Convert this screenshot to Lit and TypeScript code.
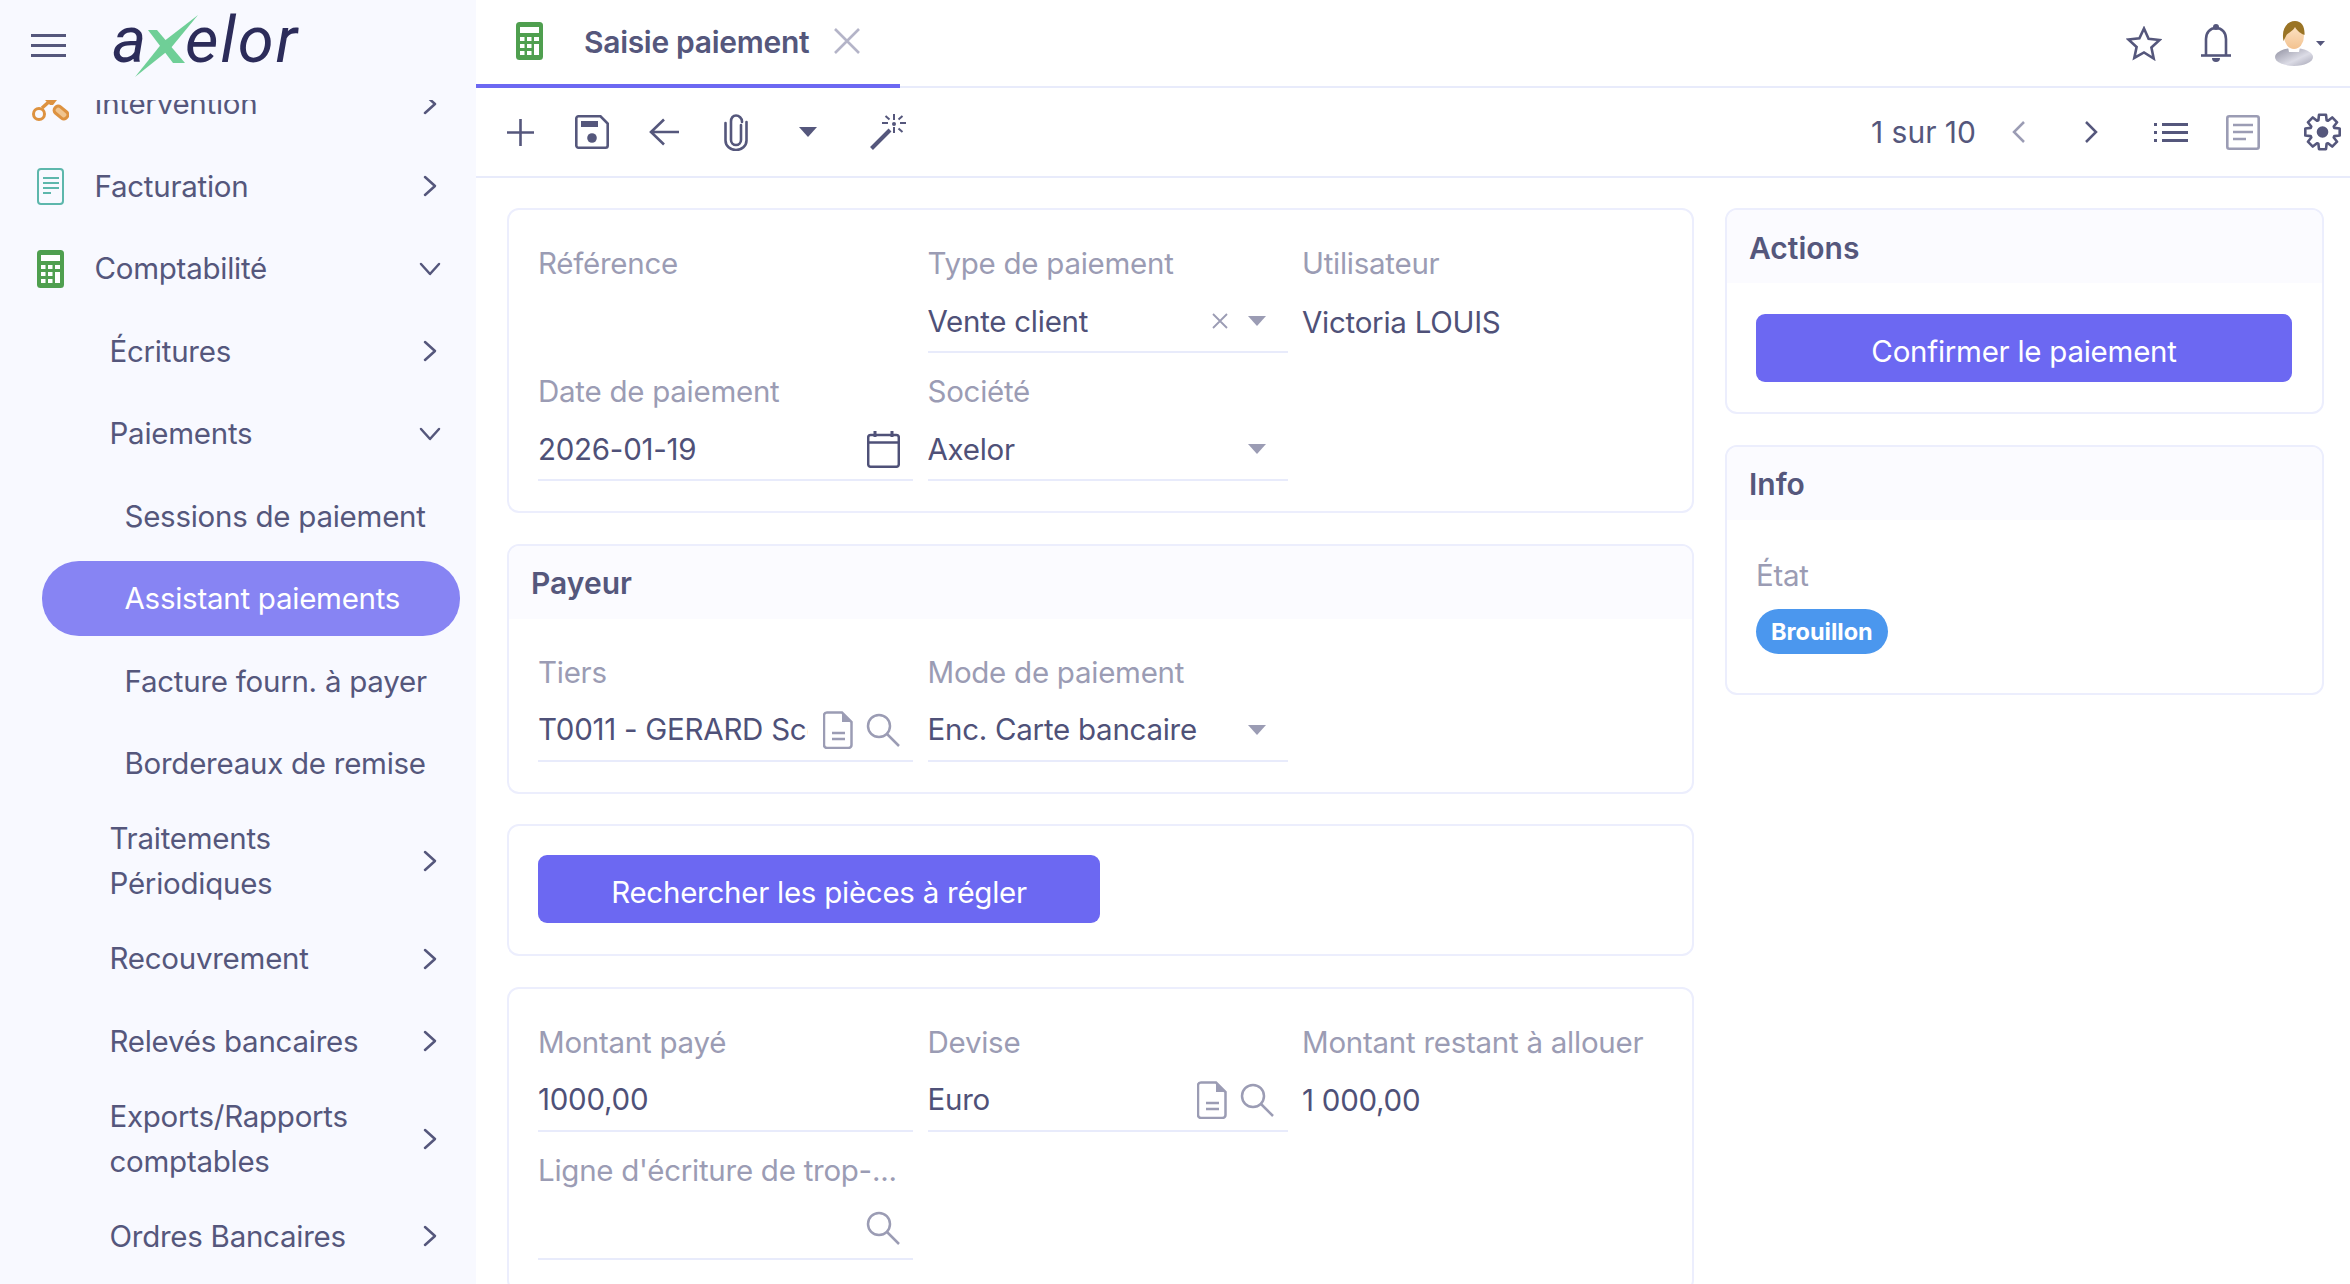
import {LitElement, html, css} from 'lit';
import {customElement} from 'lit/decorators.js';

type NavRow = {
    label: string;
    level: 0 | 1 | 2;
    icon?: 'moto' | 'doc' | 'calc';
    arrow?: 'right' | 'down';
    active?: boolean;
};

const NAV: NavRow[] = [
    {label: 'Intervention', level: 0, icon: 'moto', arrow: 'right'},
    {label: 'Facturation', level: 0, icon: 'doc', arrow: 'right'},
    {label: 'Comptabilité', level: 0, icon: 'calc', arrow: 'down'},
    {label: 'Écritures', level: 1, arrow: 'right'},
    {label: 'Paiements', level: 1, arrow: 'down'},
    {label: 'Sessions de paiement', level: 2},
    {label: 'Assistant paiements', level: 2, active: true},
    {label: 'Facture fourn. à payer', level: 2},
    {label: 'Bordereaux de remise', level: 2},
    {label: 'Traitements Périodiques', level: 1, arrow: 'right'},
    {label: 'Recouvrement', level: 1, arrow: 'right'},
    {label: 'Relevés bancaires', level: 1, arrow: 'right'},
    {label: 'Exports/Rapports comptables', level: 1, arrow: 'right'},
    {label: 'Ordres Bancaires', level: 1, arrow: 'right'},
];

// 27x38 calculator used in the menu and on the tab
const calcIcon = html`<svg width="27" height="38" viewBox="0 0 27 38">
    <rect width="27" height="38" rx="3.5" fill="#4f9f4f" />
    <rect x="4" y="5" width="19" height="6" fill="#fff" />
    <path
        fill="#fff"
        d="M4 15h4.5v4H4zM11 15h4.5v4H11zM18 15h5v4h-5zM4 22h4.5v4H4zM11 22h4.5v4H11zM18 22h5v11h-5zM4 29h4.5v4H4zM11 29h4.5v4H11z"
    />
</svg>`;

const docIcon = html`<svg width="27" height="37" viewBox="0 0 27 37">
    <rect x="1" y="1" width="25" height="35" rx="3" fill="none" stroke="#5db7ac" stroke-width="2" />
    <path d="M6 10h16M6 15h16M6 20h16M6 25h8" stroke="#5db7ac" stroke-width="2" />
</svg>`;

const motoIcon = html`<svg class="moto" width="38" height="36" viewBox="0 0 38 36">
    <circle cx="8" cy="28" r="5.5" fill="none" stroke="#dd9240" stroke-width="3" />
    <path d="M11 22 20 14" stroke="#dd9240" stroke-width="3.5" />
    <path d="M14 14h12l-4 5h-3z" fill="#dd9240" />
    <rect x="22.5" y="22.5" width="15" height="8" rx="3.500" transform="rotate(40 30 26.500)" fill="#f0c48e" stroke="#dd9240" stroke-width="3" />
</svg>`;

const chevRight = html`<svg class="chev" width="14" height="22" viewBox="0 0 14 22">
    <path d="M2 2l10 9-10 9" fill="none" stroke="currentColor" stroke-width="2.5" stroke-linecap="round" stroke-linejoin="round" />
</svg>`;

const chevLeft = html`<svg width="14" height="24" viewBox="0 0 14 24">
    <path d="M12 2 2 12l10 10" fill="none" stroke="currentColor" stroke-width="2.5" />
</svg>`;

const chevRightNav = html`<svg width="14" height="24" viewBox="0 0 14 24">
    <path d="M2 2l10 10L2 22" fill="none" stroke="currentColor" stroke-width="2.5" />
</svg>`;

const chevDown = html`<svg class="chev" width="22" height="14" viewBox="0 0 22 14">
    <path d="M2 2l9 10 9-10" fill="none" stroke="currentColor" stroke-width="2.5" stroke-linecap="round" stroke-linejoin="round" />
</svg>`;

const caret = html`<svg class="caret" width="18" height="10" viewBox="0 0 18 10"><path d="M0 0h18L9 10z" fill="currentColor" /></svg>`;

const searchIcon = html`<svg class="muted" width="34" height="34" viewBox="0 0 34 34">
    <circle cx="13" cy="13" r="11" fill="none" stroke="currentColor" stroke-width="2.5" />
    <path d="M21 21l12 12" stroke="currentColor" stroke-width="2.5" />
</svg>`;

const fileIcon = html`<svg class="muted" width="30" height="38" viewBox="0 0 30 38">
    <path d="M4 1.5h15l9.5 9.5v23a3 3 0 0 1-3 3H4a3 3 0 0 1-3-3v-30a3 3 0 0 1 3-2.5z" fill="none" stroke="currentColor" stroke-width="2.5" />
    <path d="M19 1.5v9.5h9.5z" fill="currentColor" />
    <path d="M9 22h13M9 28h13" stroke="currentColor" stroke-width="2.5" />
</svg>`;

const calendarIcon = html`<svg width="33" height="37" viewBox="0 0 33 37">
    <rect x="1.2" y="4" width="30.6" height="31.8" rx="2.5" fill="none" stroke="currentColor" stroke-width="2.5" />
    <path d="M1 11.5h31" stroke="currentColor" stroke-width="2.5" />
    <path d="M8 0v6M25 0v6" stroke="currentColor" stroke-width="3" />
</svg>`;

const crossIcon = html`<svg class="muted" width="16" height="16" viewBox="0 0 16 16">
    <path d="M1 1l14 14M15 1 1 15" stroke="currentColor" stroke-width="1.8" />
</svg>`;

// gear outline built from 8 teeth
function gearPath() {
    const cx = 18.5;
    const cy = 19;
    const pts: string[] = [];
    for (let i = 0; i < 8; i++) {
        const a = (i * Math.PI) / 4 - Math.PI / 2;
        const p = (r: number, d: number) =>
            `${(cx + r * Math.cos(a + d)).toFixed(1)} ${(cy + r * Math.sin(a + d)).toFixed(1)}`;
        pts.push(p(12.5, -0.33), p(17.5, -0.2), p(17.5, 0.2), p(12.5, 0.33));
    }
    return 'M' + pts.join('L') + 'Z';
}

const gearIcon = html`<svg width="37" height="38" viewBox="0 0 37 38">
    <path d=${gearPath()} fill="none" stroke="currentColor" stroke-width="2.6" stroke-linejoin="round" />
    <circle cx="18.5" cy="19" r="5.8" fill="currentColor" />
</svg>`;

const avatar = html`<svg width="38" height="45" viewBox="0 0 38 45">
    <defs>
        <linearGradient id="shirt" x1="0" y1="0" x2="1" y2="1">
            <stop offset="0" stop-color="#8f8f9f" />
            <stop offset="0.6" stop-color="#dcdce6" />
            <stop offset="1" stop-color="#a5a5b5" />
        </linearGradient>
        <linearGradient id="skin" x1="0" y1="0" x2="0" y2="1">
            <stop offset="0" stop-color="#fde7cb" />
            <stop offset="1" stop-color="#f3c28f" />
        </linearGradient>
    </defs>
    <ellipse cx="19" cy="36" rx="19" ry="9" fill="url(#shirt)" />
    <path d="M13 26h12l-1 5H14z" fill="#fff" />
    <ellipse cx="19" cy="15" rx="10" ry="13" fill="url(#skin)" />
    <path d="M8.500 20C6 8 12 0 20 0c7 0 10 6 9.500 14-3-1-7.500-4-9.500-8-2 4-7 6-8.500 8z" fill="#9a7425" />
</svg>`;

const logo = html`<svg class="logo" width="190" height="66" viewBox="0 0 190 66">
    <text x="0" y="48" class="logo-text" textLength="36">a</text>
    <text x="73" y="48" class="logo-text" textLength="112">elor</text>
    <path d="M86 1 51 28 23 63 58 35z" fill="#6fcf97" />
    <path d="M36 16h9l28 33H61z" fill="#6fcf97" />
</svg>`;

@customElement('app-root')
export class AppRoot extends LitElement {
    static override styles = css`
        :host {
            display: flex;
            height: 1284px;
            overflow: hidden;
            background: #fff;
            font-family: 'Inter', 'Liberation Sans', sans-serif;
            font-size: 29.5px;
            letter-spacing: -0.26px;
            line-height: 45px;
            color: #55577c;
        }

        svg {
            display: block;
            flex: none;
        }

        .muted {
            color: #9b9cb4;
        }

        .caret {
            color: #9b9cb4;
        }

        /* sidebar */
        .sidebar {
            width: 476px;
            flex: none;
            display: flex;
            flex-direction: column;
            background: #f8f9ff;
        }

        .brand {
            height: 100px;
            flex: none;
            display: flex;
            align-items: center;
            padding: 0 0 10px 31px;
            box-sizing: border-box;
        }

        .burger {
            width: 35px;
            height: 23px;
            border-top: 3px solid #55577c;
            border-bottom: 3px solid #55577c;
            box-sizing: border-box;
            position: relative;
            margin-right: 46px;
        }

        .burger::after {
            content: '';
            position: absolute;
            left: 0;
            right: 0;
            top: 7px;
            height: 3px;
            background: #55577c;
        }

        .logo {
            margin-top: 4px;
            overflow: visible;
        }

        .logo-text {
            font-family: 'Roboto', 'Liberation Sans', sans-serif;
            font-style: italic;
            font-weight: 400;
            font-size: 65px;
            letter-spacing: 0;
            fill: #2c2c5a;
        }

        .nav {
            flex: 1;
            overflow: hidden;
        }

        .nav-list {
            margin-top: -34px;
            display: flex;
            flex-direction: column;
            gap: 7.5px;
        }

        .nav-row {
            display: flex;
            align-items: center;
            min-height: 75px;
            box-sizing: border-box;
            padding: 7.5px 18px 7.5px 36px;
            margin-right: 16px;
            border-radius: 37px;
        }

        .nav-row.level-1 {
            padding-left: 109.5px;
        }

        .nav-row.level-2 {
            padding-left: 124.5px;
        }

        .nav-row.active {
            margin-left: 42px;
            padding-left: 82.5px;
            background: #8784f3;
            color: #fff;
        }

        .nav-icon {
            width: 28px;
            margin-right: 30.5px;
            flex: none;
            display: flex;
            justify-content: center;
        }

        .moto {
            margin: 0 -5px;
        }

        .nav-label {
            flex: 1;
        }

        .nav-arrow {
            width: 24px;
            margin-left: 32px;
            flex: none;
            display: flex;
            justify-content: center;
        }

        /* main column */
        .main {
            flex: 1;
            min-width: 0;
            display: flex;
            flex-direction: column;
        }

        .tabbar {
            height: 88px;
            flex: none;
            box-sizing: border-box;
            display: flex;
            border-bottom: 2px solid #e8ebfb;
        }

        .tab {
            display: flex;
            align-items: center;
            height: 88px;
            box-sizing: border-box;
            padding: 0 40px 2px;
            border-bottom: 4px solid #6c68f2;
            font-size: 30px;
            letter-spacing: -0.3px;
            font-weight: 600;
        }

        .tab-title {
            margin: 2px 25px 0 41px;
        }

        .tab-close {
            color: #b4b4c8;
        }

        .top-icons {
            margin-left: auto;
            padding-right: 25px;
            display: flex;
            align-items: center;
            gap: 39px;
        }

        .avatar {
            display: flex;
            align-items: center;
            gap: 3px;
            margin-left: 5px;
        }

        .avatar .caret {
            color: #55577c;
        }

        .toolbar {
            height: 90px;
            flex: none;
            box-sizing: border-box;
            display: flex;
            align-items: center;
            padding-left: 8px;
            border-bottom: 2px solid #e8ebfb;
        }

        .tool {
            width: 72px;
            height: 72px;
            flex: none;
            display: flex;
            align-items: center;
            justify-content: center;
        }

        .tool.after-sep {
            margin-left: 8px;
        }

        .tool.last {
            width: 56px;
            margin-left: 15px;
        }

        .pager {
            margin-left: auto;
            margin-right: 7px;
            font-size: 30px;
            letter-spacing: 0;
        }

        .tool .caret {
            color: #55577c;
        }

        .tool-grey {
            color: #9b9cb4;
        }

        /* content */
        .content {
            flex: 1;
            min-height: 0;
            overflow: hidden;
            padding: 30px 26px 0 31px;
            display: grid;
            grid-template-columns: 1187px 1fr;
            gap: 31px;
            align-items: start;
        }

        .col {
            display: flex;
            flex-direction: column;
            gap: 30.5px;
        }

        .card {
            border: 2px solid #eceefd;
            border-radius: 12px;
            background: #fff;
            overflow: hidden;
        }

        .card-head {
            height: 73px;
            box-sizing: border-box;
            padding: 3px 23px 0 22px;
            display: flex;
            align-items: center;
            background: #fbfbff;
            font-size: 30px;
            letter-spacing: 0;
            font-weight: 600;
        }

        .card-body {
            padding: 30px 30px 30px 29px;
        }

        .card-body.tight {
            padding-top: 29px;
            padding-bottom: 31px;
        }

        .card-body.action {
            padding-top: 31px;
        }

        .grid {
            display: grid;
            grid-template-columns: 375px 360px 1fr;
            column-gap: 14.5px;
            row-gap: 15px;
        }

        .field {
            min-width: 0;
            height: 113px;
            display: flex;
            flex-direction: column;
        }

        .field-label {
            padding-top: 1px;
            color: #9b9cb4;
            white-space: nowrap;
        }

        .field-value {
            flex: 1;
            display: flex;
            align-items: center;
            padding-top: 5px;
            color: #4f5178;
        }

        .field.line .field-value {
            border-bottom: 2px solid #e8ebfb;
        }

        .field-text {
            flex: 1;
            min-width: 0;
            overflow: hidden;
            white-space: nowrap;
        }

        .end-icons {
            display: flex;
            align-items: center;
            gap: 13px;
            margin-left: 15px;
            padding-right: 13.5px;
        }

        .select-icons {
            display: flex;
            align-items: center;
            gap: 20px;
            padding-right: 22px;
        }

        .btn {
            height: 68px;
            box-sizing: border-box;
            padding-top: 6px;
            border-radius: 9px;
            background: #6c68f2;
            color: #fff;
            display: flex;
            align-items: center;
            justify-content: center;
        }

        .btn-search {
            width: 562px;
        }

        .state-label {
            padding-top: 3px;
            color: #9b9cb4;
        }

        .badge {
            display: block;
            width: fit-content;
            margin: 11px 0 9px;
            padding: 0 15px;
            border-radius: 23px;
            line-height: 45px;
            background: #4b97ee;
            color: #fff;
            font-size: 23.5px;
            letter-spacing: 0;
            font-weight: 700;
        }
    `;

    private _navRow(row: NavRow) {
        const cls = `nav-row level-${row.level}${row.active ? ' active' : ''}`;
        const icons = {moto: motoIcon, doc: docIcon, calc: calcIcon};
        return html`<div class=${cls}>
            ${row.icon ? html`<span class="nav-icon">${icons[row.icon]}</span>` : ''}
            <span class="nav-label">${row.label}</span>
            ${row.arrow
                ? html`<span class="nav-arrow">${row.arrow === 'down' ? chevDown : chevRight}</span>`
                : ''}
        </div>`;
    }

    private _field(label: string, value: string, extra: unknown = '', line = true) {
        return html`<div class="field ${line ? 'line' : ''}">
            <div class="field-label">${label}</div>
            <div class="field-value">
                <span class="field-text">${value}</span>
                ${extra}
            </div>
        </div>`;
    }

    private _sidebar() {
        return html`<aside class="sidebar">
            <div class="brand"><div class="burger"></div>${logo}</div>
            <div class="nav">
                <div class="nav-list">${NAV.map((r) => this._navRow(r))}</div>
            </div>
        </aside>`;
    }

    private _tabbar() {
        return html`<div class="tabbar">
            <div class="tab">
                ${calcIcon}
                <span class="tab-title">Saisie paiement</span>
                <svg class="tab-close" width="26" height="26" viewBox="0 0 26 26">
                    <path d="M1 1l24 24M25 1 1 25" stroke="currentColor" stroke-width="2.6" />
                </svg>
            </div>
            <div class="top-icons">
                <svg width="36" height="35" viewBox="0 0 36 35">
                    <path
                        d="M18 2.5l4.6 10.3 11 1.2-8.2 7.5 2.3 11L18 26.4 8.3 32l2.3-11-8.2-7.5 11-1.2z"
                        fill="none"
                        stroke="currentColor"
                        stroke-width="2.6"
                    />
                </svg>
                <svg width="30" height="38" viewBox="0 0 30 38">
                    <path d="M5 31V15C5 8.500 9 4 15 4s10 4.500 10 11v16" fill="none" stroke="currentColor" stroke-width="2.6" />
                    <path d="M0 31.500h30" stroke="currentColor" stroke-width="2.6" />
                    <circle cx="15" cy="3" r="3" fill="currentColor" />
                    <path d="M11 34h8a4 4 0 0 1-8 0z" fill="currentColor" />
                </svg>
                <div class="avatar">
                    ${avatar}
                    <svg class="caret" width="9" height="5" viewBox="0 0 9 5"><path d="M0 0h9L4.500 5z" fill="currentColor" /></svg>
                </div>
            </div>
        </div>`;
    }

    private _toolbar() {
        return html`<div class="toolbar">
            <div class="tool">
                <svg width="27" height="27" viewBox="0 0 27 27">
                    <path d="M13.500 0v27M0 13.500h27" stroke="currentColor" stroke-width="2.6" />
                </svg>
            </div>
            <div class="tool">
                <svg width="34" height="34" viewBox="0 0 34 34">
                    <path d="M3.500 1.300h22l7.200 7.200v22a2.200 2.200 0 0 1-2.200 2.200h-27a2.200 2.200 0 0 1-2.200-2.200v-27a2.200 2.200 0 0 1 2.200-2.200z" fill="none" stroke="currentColor" stroke-width="2.6" />
                    <rect x="6" y="6" width="17" height="6" fill="currentColor" />
                    <circle cx="17" cy="23" r="4.800" fill="currentColor" />
                </svg>
            </div>
            <div class="tool">
                <svg width="30" height="28" viewBox="0 0 30 28">
                    <path d="M15 1.500 2 14l13 12.500M2 14h28" fill="none" stroke="currentColor" stroke-width="2.6" />
                </svg>
            </div>
            <div class="tool">
                <svg width="24" height="37" viewBox="0 0 24 37">
                    <path d="M17 11v15a5 5 0 0 1-10 0V7.500C7 4 9 1.500 12 1.500s6 2.500 6 6V8M22.500 8v18.500a10.500 9.500 0 0 1-21 0V9" fill="none" stroke="currentColor" stroke-width="2.6" stroke-linecap="round" />
                </svg>
            </div>
            <div class="tool">${caret}</div>
            <div class="tool after-sep">
                <svg width="36" height="36" viewBox="0 0 36 36">
                    <path d="M1.500 34.500 20 16" stroke="currentColor" stroke-width="4" />
                    <path d="M24 0v6M24 13v6M12 9h6M30 9h6M15.500 2l4 3.500M28.500 14.500l4 3.500M32.500 2l-4 3.500" stroke="currentColor" stroke-width="2" />
                    <circle cx="24" cy="10" r="2" fill="currentColor" />
                </svg>
            </div>
            <div class="pager">1 sur 10</div>
            <div class="tool tool-grey">${chevLeft}</div>
            <div class="tool">${chevRightNav}</div>
            <div class="tool after-sep">
                <svg width="34" height="21" viewBox="0 0 34 21">
                    <path d="M8 2.500h26M8 10.500h26M8 18.500h26" stroke="currentColor" stroke-width="3" />
                    <path d="M0 2.500h3M0 10.500h3M0 18.500h3" stroke="currentColor" stroke-width="3" />
                </svg>
            </div>
            <div class="tool tool-grey">
                <svg width="34" height="35" viewBox="0 0 34 35">
                    <rect x="1.300" y="1.300" width="31.400" height="32.400" rx="2" fill="none" stroke="currentColor" stroke-width="2.600" />
                    <path d="M7 10h20M7 17h20M7 24h13" stroke="currentColor" stroke-width="2.600" />
                </svg>
            </div>
            <div class="tool last">${gearIcon}</div>
        </div>`;
    }

    private _form() {
        const both = html`<span class="end-icons">${fileIcon}${searchIcon}</span>`;
        const search = html`<span class="end-icons">${searchIcon}</span>`;
        const date = html`<span class="end-icons">${calendarIcon}</span>`;
        const clearable = html`<span class="select-icons">${crossIcon}${caret}</span>`;
        const select = html`<span class="select-icons">${caret}</span>`;
        return html`<div class="col">
            <section class="card">
                <div class="card-body">
                    <div class="grid">
                        ${this._field('Référence', '', '', false)}
                        ${this._field('Type de paiement', 'Vente client', clearable)}
                        ${this._field('Utilisateur', 'Victoria LOUIS', '', false)}
                        ${this._field('Date de paiement', '2026-01-19', date)}
                        ${this._field('Société', 'Axelor', select)}
                    </div>
                </div>
            </section>
            <section class="card">
                <div class="card-head">Payeur</div>
                <div class="card-body">
                    <div class="grid">
                        ${this._field('Tiers', 'T0011 - GERARD Scea', both)}
                        ${this._field('Mode de paiement', 'Enc. Carte bancaire', select)}
                    </div>
                </div>
            </section>
            <section class="card">
                <div class="card-body tight">
                    <div class="btn btn-search">Rechercher les pièces à régler</div>
                </div>
            </section>
            <section class="card">
                <div class="card-body">
                    <div class="grid">
                        ${this._field('Montant payé', '1000,00')}
                        ${this._field('Devise', 'Euro', both)}
                        ${this._field('Montant restant à allouer', '1 000,00', '', false)}
                        ${this._field("Ligne d'écriture de trop-...", '', search)}
                    </div>
                </div>
            </section>
        </div>`;
    }

    private _aside() {
        return html`<div class="col">
            <section class="card">
                <div class="card-head">Actions</div>
                <div class="card-body action">
                    <div class="btn">Confirmer le paiement</div>
                </div>
            </section>
            <section class="card">
                <div class="card-head">Info</div>
                <div class="card-body">
                    <div class="state-label">État</div>
                    <span class="badge">Brouillon</span>
                </div>
            </section>
        </div>`;
    }

    override render() {
        return html`
            ${this._sidebar()}
            <div class="main">
                ${this._tabbar()} ${this._toolbar()}
                <div class="content">${this._form()} ${this._aside()}</div>
            </div>
        `;
    }
}

declare global {
    interface HTMLElementTagNameMap {
        'app-root': AppRoot;
    }
}
